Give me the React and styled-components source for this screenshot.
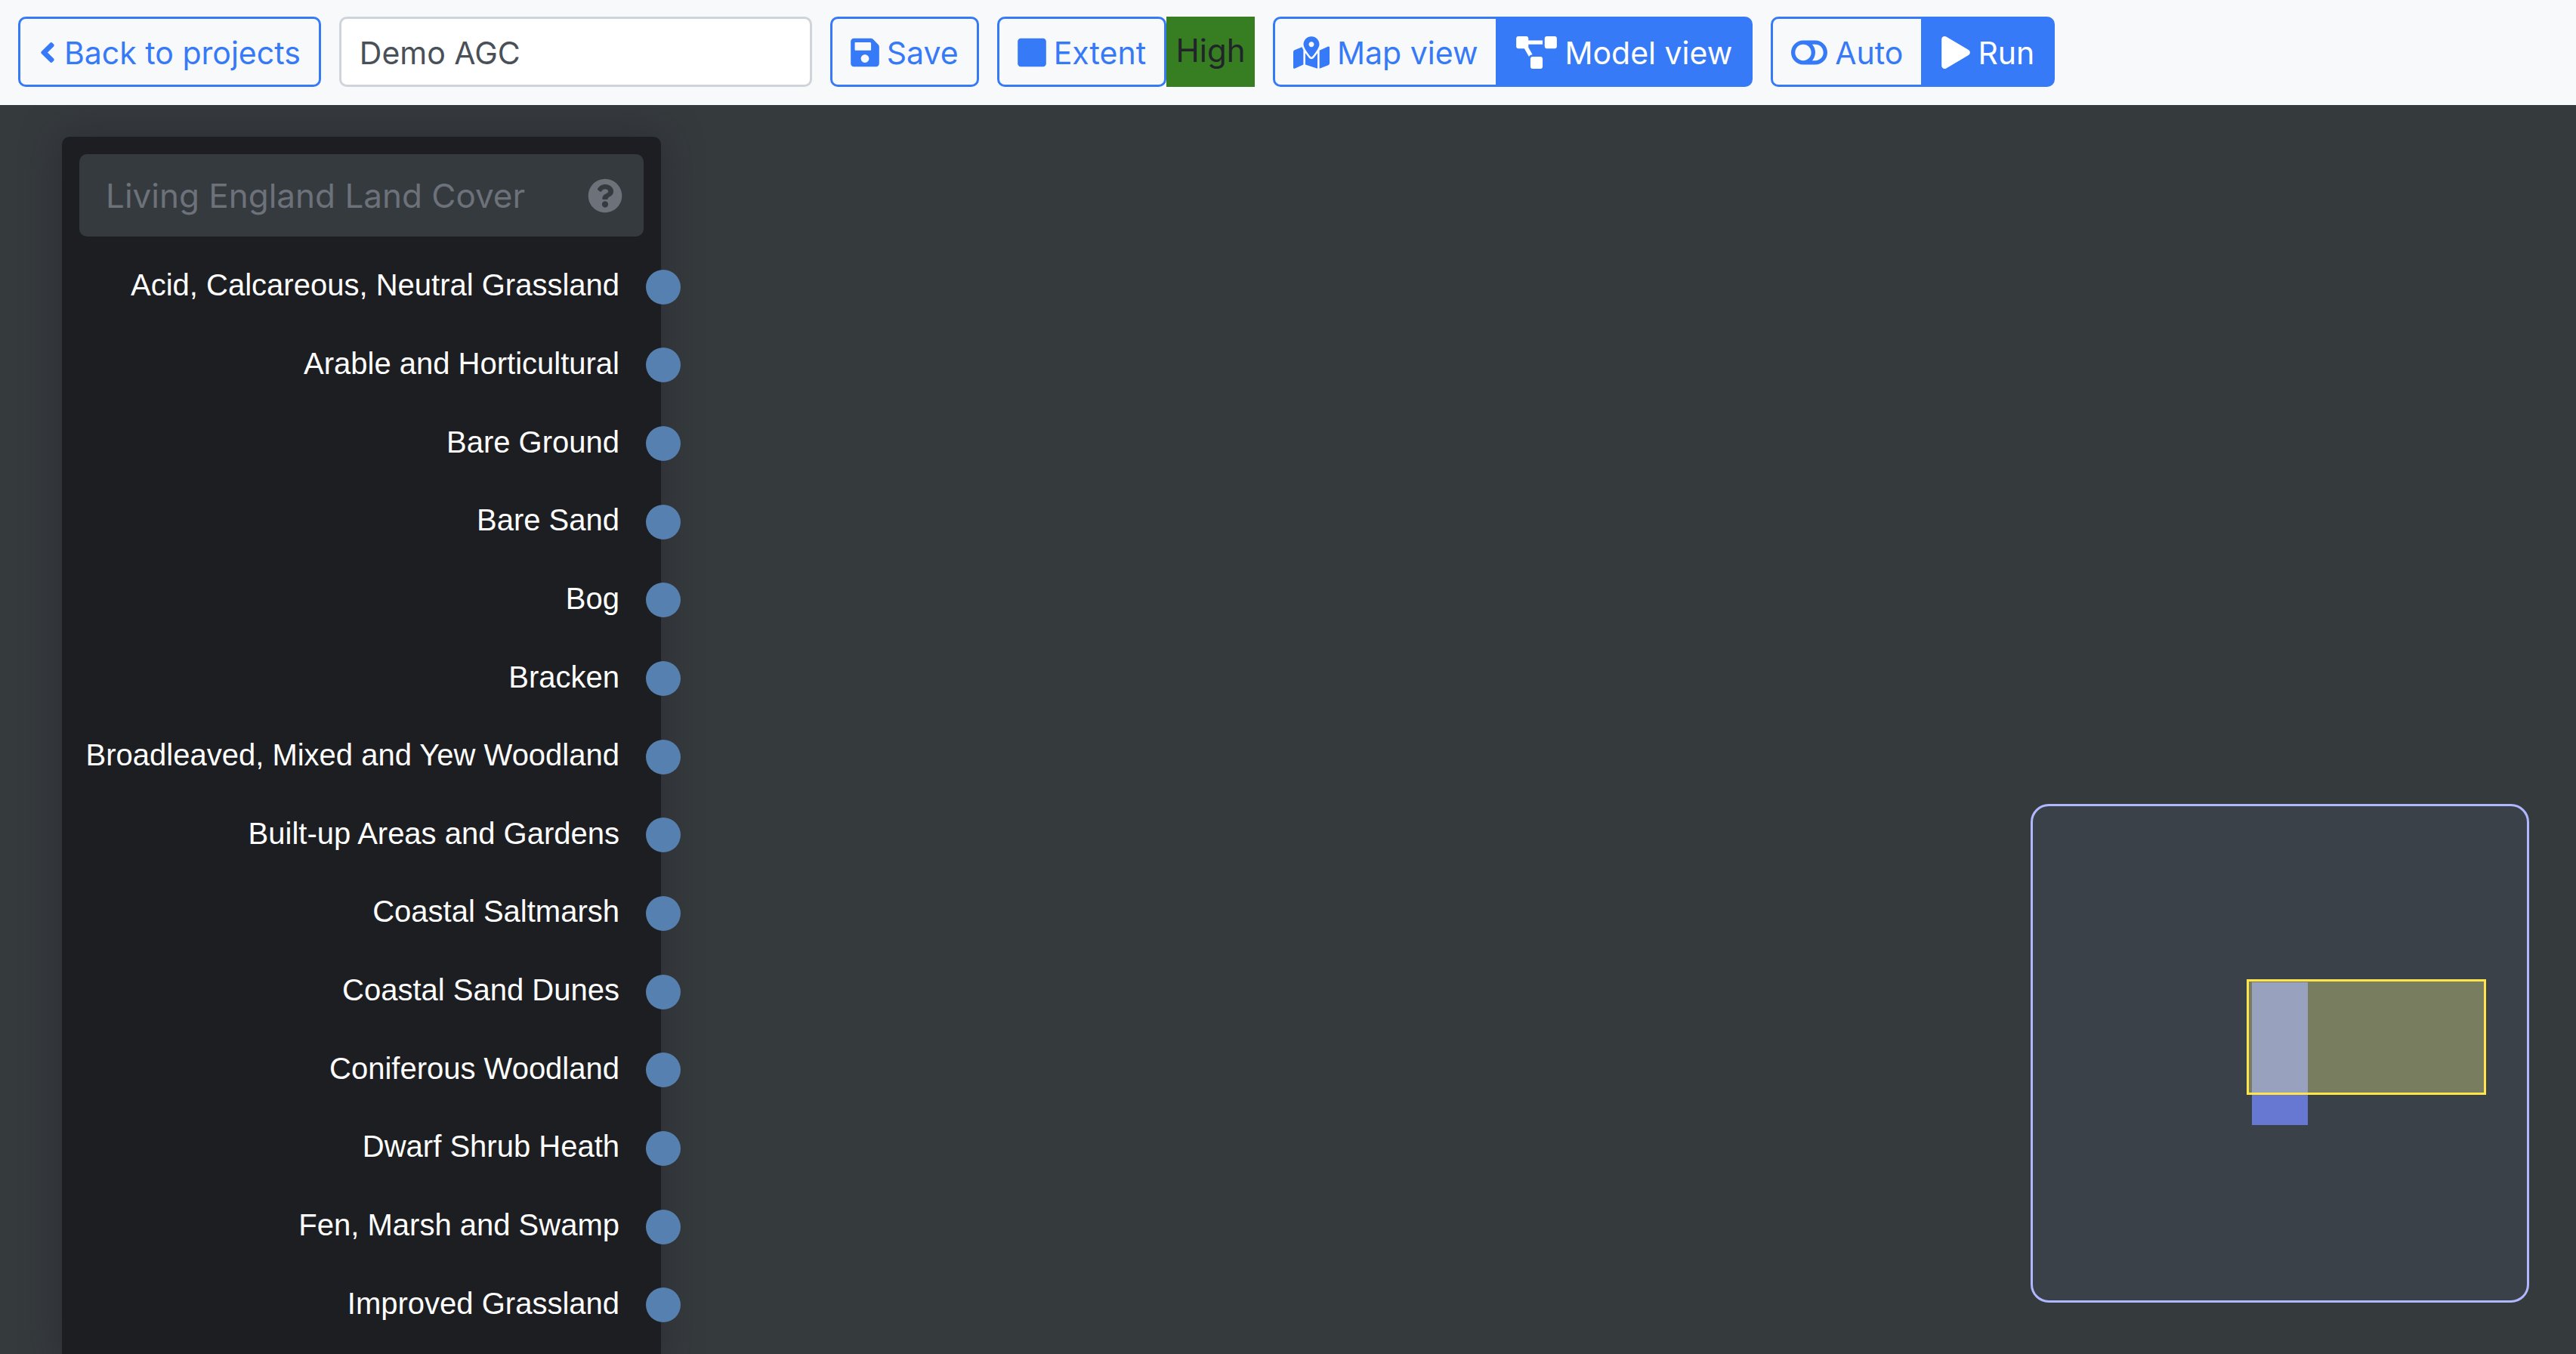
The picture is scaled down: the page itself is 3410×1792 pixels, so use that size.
import React, { useState } from "react";
import styled, { createGlobalStyle, css } from "styled-components";
import {
  FaAngleLeft,
  FaSave,
  FaSquare,
  FaMapMarkedAlt,
  FaProjectDiagram,
  FaToggleOff,
  FaPlay,
  FaQuestionCircle,
} from "react-icons/fa";

const GlobalStyle = createGlobalStyle`
  *, *::before, *::after { box-sizing: border-box; }
  body {
    margin: 0;
    font-family: Inter, "Liberation Sans", sans-serif;
    font-size: 41px;
    color: #212529;
    background: #353a3d;
  }
`;

const Page = styled.div`
  display: flex;
  flex-direction: column;
  height: 100vh;
  overflow: hidden;
`;

const Toolbar = styled.header`
  display: flex;
  flex: none;
  gap: 24px;
  padding: 22px 24px 24px;
  background: #f8f9fb;
`;

const Group = styled.div`
  display: flex;
`;

const iconWidths = { narrow: 24, regular: 38, wide: 48, extraWide: 54 };

const Button = styled.button`
  display: flex;
  align-items: center;
  justify-content: center;
  gap: 10px;
  height: 93px;
  padding: 2px 24px 0;
  border: 3px solid #377af7;
  border-radius: 10px;
  background: ${(p) => (p.$active ? "#377af7" : "transparent")};
  color: ${(p) => (p.$active ? "#ffffff" : "#377af7")};
  font: inherit;
  line-height: 60px;
  white-space: nowrap;
  cursor: pointer;

  svg {
    flex: none;
    width: ${(p) => iconWidths[p.$icon || "regular"]}px;
    height: 43px;
  }

  ${(p) =>
    p.$join === "left" &&
    css`
      border-top-right-radius: 0;
      border-bottom-right-radius: 0;
      border-right: 0;
    `}
  ${(p) =>
    p.$join === "right" &&
    css`
      border-top-left-radius: 0;
      border-bottom-left-radius: 0;
    `}
`;

const NameInput = styled.input`
  width: 626px;
  height: 93px;
  padding: 2px 24px 0;
  border: 3px solid #ced4da;
  border-radius: 10px;
  background: #ffffff;
  color: #495057;
  font: inherit;
`;

const Level = styled.span`
  display: flex;
  align-items: center;
  justify-content: center;
  width: 117px;
  padding-bottom: 4px;
  background: #377e22;
  font-size: 42px;
`;

const Canvas = styled.main`
  position: relative;
  flex: 1;
  min-height: 0;
  overflow: hidden;
  padding: 42px 82px;
  background: #353a3d;
`;

const Node = styled.section`
  width: 793px;
  padding: 23px;
  border-radius: 10px;
  background: #1d1e21;
  box-shadow: 0 0 50px rgba(35, 33, 42, 0.5);
`;

const NodeTitle = styled.h1`
  display: flex;
  align-items: center;
  justify-content: space-between;
  height: 109px;
  margin: 0 0 15px;
  padding: 0 28px 0 35px;
  border-radius: 10px;
  background: #353a3e;
  color: #6c717a;
  font-size: 44px;
  font-weight: 400;

  svg {
    width: 46px;
    height: 46px;
  }
`;

const Outputs = styled.ul`
  display: grid;
  grid-auto-rows: 1fr;
  height: 1451px;
  margin: 0;
  padding: 0;
  list-style: none;
`;

const Output = styled.li`
  display: flex;
  align-items: center;
  justify-content: flex-end;
  gap: 35px;
  margin-right: -49px;
  color: #ffffff;
  font-family: "Liberation Sans", Arial, sans-serif;
  font-size: 40px;
  white-space: nowrap;
`;

const OutputLabel = styled.span`
  padding-bottom: 4px;
`;

const Socket = styled.span`
  width: 46px;
  height: 46px;
  border-radius: 50%;
  background: #5680b0;
`;

const Minimap = styled.aside`
  position: absolute;
  right: 62px;
  bottom: 68px;
  width: 660px;
  height: 660px;
  border: 3px solid #b1b7ff;
  border-radius: 24px;
  background: #3a4148;
`;

const MinimapNode = styled.div`
  position: absolute;
  left: 290px;
  top: 233px;
  width: 74px;
  height: 189px;
  background: #6778d3;
`;

const MinimapViewport = styled.div`
  position: absolute;
  left: 283px;
  top: 229px;
  width: 317px;
  height: 153px;
  border: 3px solid #ffe54a;
  background: rgba(255, 251, 146, 0.32);
`;

const habitats = [
  "Acid, Calcareous, Neutral Grassland",
  "Arable and Horticultural",
  "Bare Ground",
  "Bare Sand",
  "Bog",
  "Bracken",
  "Broadleaved, Mixed and Yew Woodland",
  "Built-up Areas and Gardens",
  "Coastal Saltmarsh",
  "Coastal Sand Dunes",
  "Coniferous Woodland",
  "Dwarf Shrub Heath",
  "Fen, Marsh and Swamp",
  "Improved Grassland",
];

export default function App() {
  const [name, setName] = useState("Demo AGC");

  return (
    <Page>
      <GlobalStyle />
      <Toolbar>
        <Button type="button" $icon="narrow">
          <FaAngleLeft />
          Back to projects
        </Button>
        <NameInput
          aria-label="Project name"
          value={name}
          onChange={(e) => setName(e.target.value)}
        />
        <Button type="button">
          <FaSave />
          Save
        </Button>
        <Group>
          <Button type="button">
            <FaSquare />
            Extent
          </Button>
          <Level>High</Level>
        </Group>
        <Group>
          <Button type="button" $join="left" $icon="wide">
            <FaMapMarkedAlt />
            Map view
          </Button>
          <Button type="button" $join="right" $icon="extraWide" $active>
            <FaProjectDiagram />
            Model view
          </Button>
        </Group>
        <Group>
          <Button type="button" $join="left" $icon="wide">
            <FaToggleOff />
            Auto
          </Button>
          <Button type="button" $join="right" $active>
            <FaPlay />
            Run
          </Button>
        </Group>
      </Toolbar>
      <Canvas>
        <Node>
          <NodeTitle>
            Living England Land Cover
            <FaQuestionCircle />
          </NodeTitle>
          <Outputs>
            {habitats.map((habitat) => (
              <Output key={habitat}>
                <OutputLabel>{habitat}</OutputLabel>
                <Socket />
              </Output>
            ))}
          </Outputs>
        </Node>
        <Minimap>
          <MinimapNode />
          <MinimapViewport />
        </Minimap>
      </Canvas>
    </Page>
  );
}
